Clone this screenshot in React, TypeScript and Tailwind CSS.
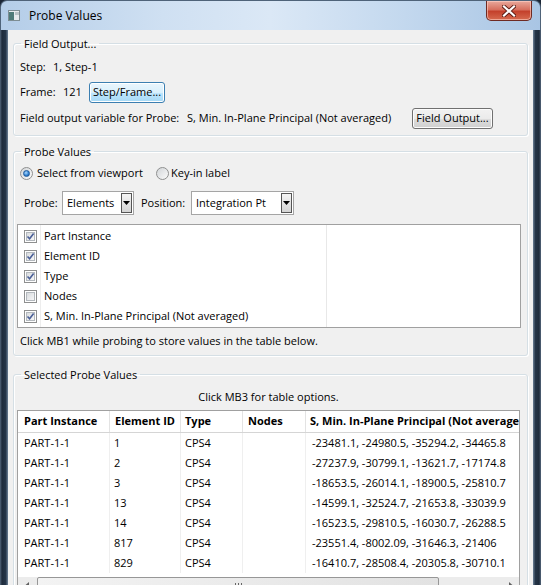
import React from 'react'

// Probe Values dialog (Win7 look)

const fields = [
  { label: 'Part Instance', checked: true },
  { label: 'Element ID', checked: true },
  { label: 'Type', checked: true },
  { label: 'Nodes', checked: false },
  { label: 'S, Min. In-Plane Principal (Not averaged)', checked: true },
]

const rows: [string, string][] = [
  ['1', '-23481.1, -24980.5, -35294.2, -34465.8'],
  ['2', '-27237.9, -30799.1, -13621.7, -17174.8'],
  ['3', '-18653.5, -26014.1, -18900.5, -25810.7'],
  ['13', '-14599.1, -32524.7, -21653.8, -33039.9'],
  ['14', '-16523.5, -29810.5, -16030.7, -26288.5'],
  ['817', '-23551.4, -8002.09, -31646.3, -21406'],
  ['829', '-16410.7, -28508.4, -20305.8, -30710.1'],
]

function Checkbox({ checked }: { checked: boolean }) {
  return (
    <span className="flex h-[13px] w-[13px] items-center justify-center border border-[#8e8f8f] bg-white">
      <span className="relative flex h-[9px] w-[9px] items-center justify-center border border-[#b3b8bd] bg-[linear-gradient(135deg,#d9dcdf,#f6f6f6)]">
        {checked && (
          <svg width="9" height="9" viewBox="0 0 9 9" className="absolute -left-px -top-px">
            <path d="M1.5 4.5 L3.6 6.8 L7.6 1.6" fill="none" stroke="#4a5f97" strokeWidth="1.6" />
          </svg>
        )}
      </span>
    </span>
  )
}

function Radio({ checked }: { checked: boolean }) {
  return (
    <span className="flex h-[13px] w-[13px] items-center justify-center rounded-full border border-[#8e8f8f] bg-[linear-gradient(135deg,#d2d5d8,#fbfbfb)]">
      {checked && (
        <span className="h-[7px] w-[7px] rounded-full border border-[#1e5a9c] bg-[radial-gradient(circle_at_40%_35%,#a8d8ff,#2f7fd0_60%,#16508f)]" />
      )}
    </span>
  )
}

function Combo({ value, width }: { value: string; width: string }) {
  return (
    <div className={`flex h-[24px] items-center border border-[#a5a5a5] bg-white pl-[4px] ${width}`}>
      <span className="flex-1 truncate">{value}</span>
      <span className="mr-px flex h-[20px] w-[11px] items-center justify-center border border-[#555] bg-[linear-gradient(#f4f4f4,#d4d4d4)]">
        <svg width="7" height="4" viewBox="0 0 7 4">
          <path d="M0 0 H7 L3.5 4 Z" fill="#000" />
        </svg>
      </span>
    </div>
  )
}

function Button({ children, hot, width }: { children: React.ReactNode; hot?: boolean; width: string }) {
  return (
    <button
      className={`flex h-[21px] items-center justify-center rounded-[3px] border text-black ${width} ${
        hot
          ? 'border-[#3c7fb1] bg-[linear-gradient(#eaf6fd_0%,#d9f0fc_50%,#bee6fd_51%,#a7d9f5_100%)] shadow-[inset_0_0_0_1px_#fff]'
          : 'border-[#707070] bg-[linear-gradient(#f2f2f2_0%,#ebebeb_50%,#dddddd_51%,#cfcfcf_100%)] shadow-[inset_0_0_0_1px_#fcfcfc]'
      }`}
    >
      {children}
    </button>
  )
}

function Group({ title, className, children }: { title: string; className?: string; children: React.ReactNode }) {
  return (
    <fieldset className={`rounded-[3px] border border-[#d5dfe5] shadow-[inset_1px_1px_0_#fff,1px_1px_0_#fff] ${className ?? ''}`}>
      <legend className="px-[3px] leading-[15px]">{title}</legend>
      {children}
    </fieldset>
  )
}

export default function App() {
  return (
    <div className="h-[585px] w-[541px] overflow-hidden bg-[#1b2636] font-['Open_Sans',sans-serif] text-[11px] text-black">
      {/* title bar */}
      <div className="flex h-[30px] items-center rounded-t-[7px] border border-b-0 border-[#4f6379] bg-[linear-gradient(90deg,#b4cde8_0%,#cfe0f2_30%,#dbe8f6_50%,#c3d8ee_75%,#a9c5e4_100%)]">
        <svg width="12" height="11" viewBox="0 0 12 11" className="ml-[7px]">
          <rect x="0.5" y="0.5" width="11" height="10" fill="#e6eaec" stroke="#7d8d93" />
          <rect x="1" y="2" width="5" height="8" fill="#4f7b78" />
          <rect x="7" y="2" width="4" height="3" fill="#b9c3c6" />
        </svg>
        <span className="ml-[9px] text-[12px] leading-none">Probe Values</span>
        <div className="mr-[8px] ml-auto flex h-[20px] w-[46px] items-center justify-center self-start rounded-b-[5px] border border-t-0 border-[#6e2a23] bg-[linear-gradient(#e9a99c_0%,#d7705f_45%,#c4412c_55%,#d66a4f_100%)] shadow-[inset_0_0_0_1px_rgba(255,210,200,0.6)]">
          <svg width="14" height="12" viewBox="0 0 14 12">
            <path d="M2 1.5 L12 10.5 M12 1.5 L2 10.5" stroke="#5a1a12" strokeWidth="4" strokeLinecap="square" />
            <path d="M2 1.5 L12 10.5 M12 1.5 L2 10.5" stroke="#fff" strokeWidth="2.2" strokeLinecap="square" />
          </svg>
        </div>
      </div>

      <div className="flex h-[555px]">
        <div className="w-[8px] bg-[linear-gradient(90deg,#55677c_0%,#1e2b3b_25%,#243447_70%,#6b7f95_100%)]" />

        {/* client area */}
        <div className="flex w-[525px] flex-col bg-[#f0f0f0] px-[5px] pt-[6px]">
          <Group title="Field Output..." className="px-[6px] pb-[6px] [&>legend]:ml-px">
            <div className="mt-[8px] flex h-[16px] items-center">
              <span className="w-[33px]">Step:</span>
              <span>1, Step-1</span>
            </div>
            <div className="mt-[7px] flex h-[21px] items-center">
              <span className="w-[43px]">Frame:</span>
              <span className="w-[26px]">121</span>
              <Button hot width="w-[76px]">Step/Frame...</Button>
            </div>
            <div className="mt-[5px] flex h-[21px] items-center">
              <span className="w-[167px] whitespace-nowrap">Field output variable for Probe:</span>
              <span className="w-[225px] whitespace-nowrap">S, Min. In-Plane Principal (Not averaged)</span>
              <Button width="w-[81px]">Field Output...</Button>
            </div>
          </Group>

          <Group title="Probe Values" className="mt-[8px] px-[3px] pb-[6px] [&>legend]:ml-[4px]">
            <div className="mt-[6px] flex h-[16px] items-center pl-[3px]">
              <span className="flex w-[136px] items-center gap-[4px]">
                <Radio checked />
                <span>Select from viewport</span>
              </span>
              <span className="flex items-center gap-[2px]">
                <Radio checked={false} />
                <span>Key-in label</span>
              </span>
            </div>
            <div className="mt-[10px] flex h-[24px] items-center pl-[7px]">
              <span className="w-[38px]">Probe:</span>
              <Combo value="Elements" width="w-[72px]" />
              <span className="ml-[7px] w-[50px]">Position:</span>
              <Combo value="Integration Pt" width="w-[103px]" />
            </div>
            <div className="mt-[9px] flex h-[104px] w-[504px] border border-[#a0a0a0] bg-white">
              <div className="flex w-[309px] border-r border-[#e8e8e8]">
                <div className="w-[23px] border-r border-[#ededed] pt-px">
                  {fields.map(f => (
                    <div key={f.label} className="flex h-[20px] items-center pl-[6px]">
                      <Checkbox checked={f.checked} />
                    </div>
                  ))}
                </div>
                <div className="flex-1 pt-px pl-[3px]">
                  {fields.map(f => (
                    <div key={f.label} className="flex h-[20px] items-center whitespace-nowrap">
                      {f.label}
                    </div>
                  ))}
                </div>
              </div>
            </div>
            <div className="mt-[5px] flex h-[16px] items-center pl-[3px]">
              Click MB1 while probing to store values in the table below.
            </div>
          </Group>

          <Group title="Selected Probe Values" className="mt-[11px] px-[3px] [&>legend]:ml-[4px]">
            <div className="mt-[7px] flex h-[16px] items-center justify-center pr-[4px]">
              Click MB3 for table options.
            </div>
            <div className="mt-[5px] w-[503px] border border-[#a0a0a0] bg-white">
              <div className="grid h-[22px] grid-cols-[92px_71px_62px_63px_1fr] border-b border-[#d5d5d5] font-bold">
                <div className="flex items-center border-r border-[#e3e3e3] pl-[6px]">Part Instance</div>
                <div className="flex items-center border-r border-[#e3e3e3] pl-[5px]">Element ID</div>
                <div className="flex items-center border-r border-[#e3e3e3] pl-[4px]">Type</div>
                <div className="flex items-center border-r border-[#e3e3e3] pl-[5px]">Nodes</div>
                <div className="flex items-center overflow-hidden whitespace-nowrap pl-[4px]">
                  S, Min. In-Plane Principal (Not averaged)
                </div>
              </div>
              {rows.map(([id, val]) => (
                <div key={id} className="grid h-[20px] grid-cols-[92px_71px_62px_63px_1fr]">
                  <div className="flex items-center border-r border-[#efefef] pl-[6px]">PART-1-1</div>
                  <div className="flex items-center border-r border-[#efefef] pl-[4px]">{id}</div>
                  <div className="flex items-center border-r border-[#efefef] pl-[4px]">CPS4</div>
                  <div className="border-r border-[#efefef]" />
                  <div className="flex items-center whitespace-nowrap pl-[6px]">{val}</div>
                </div>
              ))}
              <div className="mt-[4px] flex h-[17px] bg-[#ececec]">
                <div className="flex w-[17px] items-center justify-center">
                  <svg width="4" height="7" viewBox="0 0 4 7">
                    <path d="M4 0 V7 L0 3.5 Z" fill="#606060" />
                  </svg>
                </div>
                <div className="ml-[2px] flex w-[402px] items-center justify-center rounded-[2px] border border-[#979797] bg-[linear-gradient(90deg,#f3f3f3,#e2e2e2)]">
                  <span className="flex gap-[2px]">
                    <span className="h-[6px] w-px bg-[#666]" />
                    <span className="h-[6px] w-px bg-[#666]" />
                    <span className="h-[6px] w-px bg-[#666]" />
                  </span>
                </div>
                <div className="flex-1" />
                <div className="flex w-[17px] items-center justify-center">
                  <svg width="4" height="7" viewBox="0 0 4 7">
                    <path d="M0 0 V7 L4 3.5 Z" fill="#606060" />
                  </svg>
                </div>
              </div>
            </div>
          </Group>
        </div>

        <div className="w-[8px] bg-[linear-gradient(90deg,#6b7f95_0%,#243447_30%,#1e2b3b_75%,#55677c_100%)]" />
      </div>
    </div>
  )
}
